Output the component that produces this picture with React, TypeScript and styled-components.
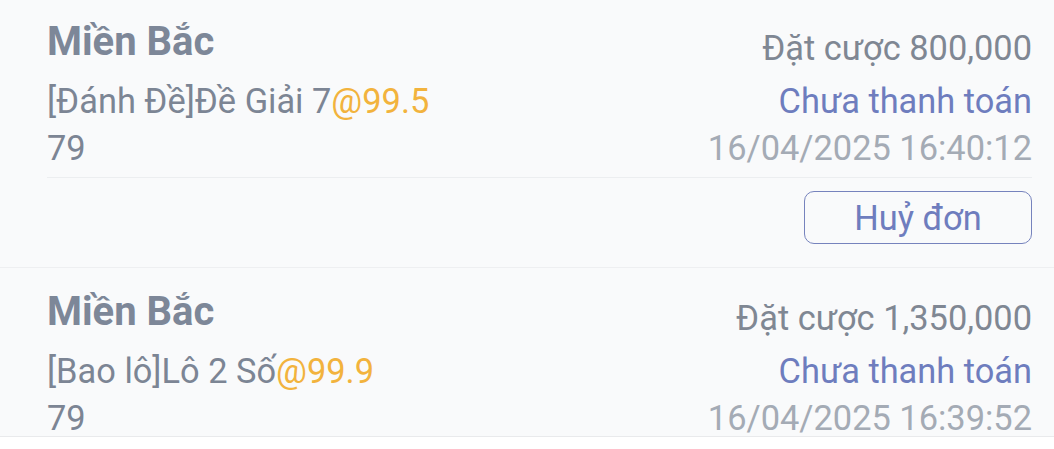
import styled, { createGlobalStyle } from 'styled-components';

type Bet = {
	region: string
	kind: string
	odds: string
	number: string
	amount: string
	status: string
	time: string
	cancellable: boolean
};

const bets: Bet[] = [
	{
		region: 'Miền Bắc',
		kind: '[Đánh Đề]Đề Giải 7',
		odds: '@99.5',
		number: '79',
		amount: '800,000',
		status: 'Chưa thanh toán',
		time: '16/04/2025 16:40:12',
		cancellable: true,
	},
	{
		region: 'Miền Bắc',
		kind: '[Bao lô]Lô 2 Số',
		odds: '@99.9',
		number: '79',
		amount: '1,350,000',
		status: 'Chưa thanh toán',
		time: '16/04/2025 16:39:52',
		cancellable: false,
	},
];

const GlobalStyle = createGlobalStyle`
	html, body {
		margin: 0;
		padding: 0;
		background: #ffffff;
		font-family: Roboto, "Noto Sans", "Liberation Sans", sans-serif;
	}
`;

export default function App() {
	return (
		<>
			<GlobalStyle/>
			<List>
				{bets.map((bet, i) => (
					<Card key={i}>
						<Info>
							<Left>
								<Region>{bet.region}</Region>
								<Line>{bet.kind}<Odds>{bet.odds}</Odds></Line>
								<Line>{bet.number}</Line>
							</Left>
							<Right>
								<Amount>Đặt cược {bet.amount}</Amount>
								<Status>{bet.status}</Status>
								<Time>{bet.time}</Time>
							</Right>
						</Info>
						{bet.cancellable && (
							<Actions>
								<CancelButton>Huỷ đơn</CancelButton>
							</Actions>
						)}
					</Card>
				))}
			</List>
		</>
	);
}

const List = styled.div`
	height: 436px;
	overflow: hidden;
	background: #f9fafb;
	border-bottom: 1px solid #e9eaec;
`;

const Card = styled.div`
	padding: 0 22px 0 47px;
	border-bottom: 1px solid #eeeff1;

	&:first-child {
		margin-top: -2px;
	}
`;

const Info = styled.div`
	display: flex;
	justify-content: space-between;
	padding-top: 20px;
	padding-bottom: 5px;
	border-bottom: 1px solid #eceef0;
`;

const Left = styled.div`
	display: flex;
	flex-direction: column;
`;

const Right = styled.div`
	display: flex;
	flex-direction: column;
	align-items: flex-end;
	padding-top: 7px;
`;

const Region = styled.div`
	font-size: 40px;
	font-weight: 700;
	line-height: 48px;
	color: #7d8798;
	margin-bottom: 12px;
`;

const Line = styled.div`
	font-size: 34.4px;
	line-height: 47px;
	color: #7c8594;
	white-space: nowrap;
`;

const Odds = styled.span`
	color: #f2b33d;
`;

const Amount = styled.div`
	font-size: 34.4px;
	line-height: 47px;
	color: #7f8793;
	margin-bottom: 6px;
	white-space: nowrap;
`;

const Status = styled.div`
	font-size: 34.4px;
	line-height: 47px;
	color: #6e7dbe;
	white-space: nowrap;
`;

const Time = styled.div`
	font-size: 34.4px;
	line-height: 47px;
	color: #a4abb5;
	white-space: nowrap;
`;

const Actions = styled.div`
	display: flex;
	justify-content: flex-end;
	padding: 13px 0 23px;
`;

const CancelButton = styled.button`
	width: 228px;
	height: 53px;
	border: 1.5px solid #7683bd;
	border-radius: 10px;
	background: transparent;
	color: #6e7dbe;
	font-family: Roboto, "Noto Sans", sans-serif;
	font-size: 34.4px;
	padding: 0;
`;
